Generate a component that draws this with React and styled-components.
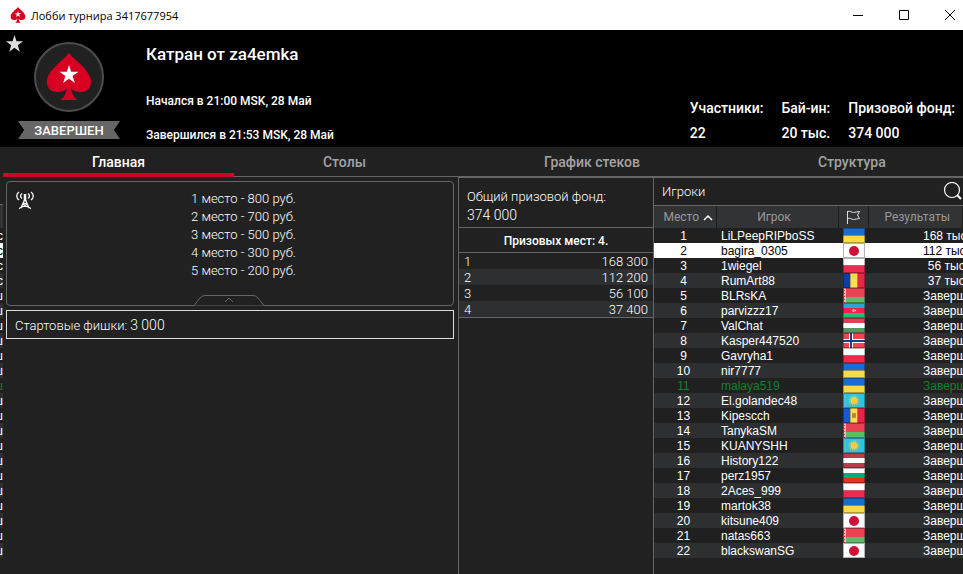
import React from 'react'
import styled, { createGlobalStyle } from 'styled-components'

const GlobalStyle = createGlobalStyle`
* { box-sizing: border-box; }
html, body, #root { height: 100%; }
body {
  margin: 0;
  overflow: hidden;
  background: #212121;
  color: #fff;
  font-family: Roboto, sans-serif;
}
button {
  margin: 0;
  padding: 0;
  border: none;
  background: none;
  color: inherit;
  font: inherit;
  cursor: pointer;
}
svg { display: block; }
`

const Window = styled.div`
  display: flex;
  flex-direction: column;
  min-height: 100vh;
`
const TitleBar = styled.div`
  display: flex;
  align-items: center;
  height: 30px;
  padding-left: 10px;
  background: #fff;
  color: #000;
`
const WindowTitle = styled.div`
  flex: 1;
  margin-left: 5px;
  font-family: "Open Sans", sans-serif;
  font-size: 11px;
`
const WindowButton = styled.button`
  display: flex;
  align-items: center;
  justify-content: center;
  width: 46px;
  height: 28px;
  &:last-child {
    justify-content: flex-start;
    width: 36px;
    padding-left: 18px;
  }
`

const Header = styled.header`
  position: relative;
  display: flex;
  height: 117px;
  padding: 12px 8px 0 18px;
  background: #000;
  font-weight: 500;
`
const Favourite = styled.button`
  position: absolute;
  top: 5px;
  left: 6px;
`
const Badge = styled.div`
  display: flex;
  flex-direction: column;
  align-items: center;
  gap: 9px;
  width: 102px;
`
const Ribbon = styled.div`
  width: 102px;
  height: 18px;
  background: #666;
  clip-path: polygon(0 0, 100% 0, 94% 50%, 100% 100%, 0 100%, 6% 50%);
  font-size: 13px;
  line-height: 19px;
  text-align: center;
`
const Info = styled.div`
  flex: 1;
  margin-left: 26px;
  font-size: 12px;
`
const Title = styled.h1`
  margin: 0 0 23px;
  font-size: 17px;
  font-weight: 500;
  line-height: 24px;
`
const Time = styled.div`
  height: 34px;
  line-height: 24px;
`
const Stats = styled.dl`
  display: flex;
  gap: 18px;
  margin: 54px 0 0;
  font-size: 14px;
  line-height: 25px;
  dd { margin: 0; }
`

const Tabs = styled.nav`
  display: flex;
  height: 30px;
  margin-left: 3px;
  border-bottom: 1px solid #666;
`
const Tab = styled.button`
  flex: 1 0 auto;
  height: 30px;
  padding: 4px 89px 0;
  border-bottom: 4px solid ${props => props.$active ? '#d70022' : 'transparent'};
  color: ${props => props.$active ? '#fff' : '#a3a3a3'};
  font-size: 14px;
  font-weight: 500;
`

const Body = styled.main`
  flex: 1;
  display: grid;
  grid-template-columns: 3px minmax(0, 1fr) 195px 310px;
`

/* edge of the lobby window lying behind this one */
const Behind = styled.div`
  overflow: hidden;
  padding-top: 27px;
`
const BehindHead = styled.div`
  height: 24px;
  border-top: 1px solid #666;
  background: #323335;
`
const BehindRow = styled.div`
  display: flex;
  justify-content: flex-end;
  height: 15px;
  background: ${props => props.$current ? '#fff' : props.$even ? '#2d2f31' : '#202020'};
  color: ${props => props.$current ? '#000' : props.$own ? '#12802f' : '#fff'};
  font-family: "Liberation Sans", sans-serif;
  font-size: 12px;
  line-height: 16px;
`

const Left = styled.section`
  padding: 4px 4px 0 3px;
`
const Message = styled.div`
  position: relative;
  display: flex;
  height: 125px;
  padding: 8px 0 0 9px;
  border: 1px solid #666;
  border-radius: 4px;
`
const MessageText = styled.div`
  display: flex;
  flex: 1;
  justify-content: center;
  font-size: 13px;
  font-weight: 300;
  line-height: 18px;
  white-space: pre-line;
`
const Collapse = styled.button`
  position: absolute;
  bottom: -1px;
  left: calc(50% - 36px);
`
const Chips = styled.div`
  height: 29px;
  margin-top: 4px;
  padding-left: 8px;
  border: 1px solid #ddd;
  font-size: 13px;
  font-weight: 300;
  line-height: 28px;
`
const Value = styled.span`
  margin-left: 3px;
  font-size: 14px;
`

const Middle = styled.section`
  border-left: 1px solid #666;
  border-top: 1px solid #666;
`
const Pool = styled.div`
  height: 50px;
  padding: 10px 8px 0;
  border-bottom: 1px solid #666;
  font-size: 13px;
  font-weight: 300;
  line-height: 18px;
`
const Total = styled.div`
  font-size: 14px;
`
const Places = styled.div`
  height: 25px;
  border-bottom: 1px solid #666;
  font-size: 12px;
  font-weight: 500;
  line-height: 26px;
  text-align: center;
`
const PrizeTable = styled.table`
  width: 100%;
  border-collapse: collapse;
  box-shadow: 0 1px 0 #666;
  font-size: 13px;
  font-weight: 300;
  line-height: 15px;
  tr:nth-child(even) { background: #2d2f31; }
  td { padding: 1px 5px 0; }
  td:last-child { text-align: right; }
`

const Right = styled.section`
  overflow: hidden;
  border-left: 1px solid #666;
  border-top: 1px solid #666;
`
const PlayersBar = styled.div`
  display: flex;
  align-items: center;
  justify-content: space-between;
  height: 28px;
  padding: 0 1px 0 8px;
  border-bottom: 1px solid #666;
  font-size: 13px;
  font-weight: 300;
`
const PlayersTable = styled.table`
  width: 100%;
  table-layout: fixed;
  border-collapse: collapse;
  font-family: "Liberation Sans", sans-serif;
  font-size: 12px;
`
const HeadCell = styled.th`
  width: ${props => props.$width};
  height: 22px;
  padding: 0 ${props => props.$right || '0'} 0 ${props => props.$left || '0'};
  border-right: 1px solid #1c1c1c;
  background: #323335;
  color: #999;
  font-family: Roboto, sans-serif;
  font-size: 12px;
  font-weight: 400;
  white-space: nowrap;
  svg { display: inline-block; vertical-align: middle; }
`
const PlayerRow = styled.tr`
  height: 15px;
  background: ${props => props.$current ? '#fff' : '#202020'};
  color: ${props => props.$current ? '#000' : props.$own ? '#12802f' : '#fff'};
  line-height: 14px;
  &:nth-child(even) {
    background: ${props => props.$current ? '#fff' : '#2d2f31'};
  }
  td {
    padding: 1px 0 0;
    white-space: nowrap;
  }
  td:nth-child(1) { padding-right: 3px; text-align: center; }
  td:nth-child(2) { padding-left: 5px; }
  td:nth-child(3) { padding: 0 0 0 5px; }
  td:nth-child(4) { padding-left: 55px; }
`
const Result = styled.div`
  width: 45px;
  text-align: right;
`

const Spade = ({ size }) => (
  <svg width={size} height={size} viewBox="0 0 48 48">
    <path d="M24 0C19 7 2 17 2 29c0 6 4 10 10 10 4 0 8-1 10-4-1 6-3 10-7 12h18c-4-2-6-6-7-12 2 3 6 4 10 4 6 0 10-4 10-10C46 17 29 7 24 0z" fill="#d70022" />
    <path d="M24 12l2.200 6.800h7.300l-5.900 4.300 2.300 7-5.900-4.400-5.900 4.400 2.300-7-5.900-4.300h7.300z" fill="#fff" />
  </svg>
)

const Logo = () => (
  <svg width="70" height="70" viewBox="0 0 70 70">
    <circle cx="35" cy="35" r="34" fill="#212121" stroke="#4d4d4d" strokeWidth="2" />
    <svg x="11" y="11"><Spade size={48} /></svg>
  </svg>
)

const stripes = {
  ua: ['#176dd2', '#ffda44'],
  pl: ['#fff', '#ed2b4f'],
  az: ['#2aa5d8', '#f02050', '#25bd75'],
  hu: ['#df4053', '#fff', '#5b9365'],
  lv: ['#b63e4b', '#fff', '#b63e4b'],
  bg: ['#fff', '#0aa87c', '#e63222'],
}
const pales = {
  ro: ['#0c3fa5', '#ffda58', '#ed2542'],
  md: ['#1559ce', '#ffda58', '#ed2145'],
}

const Flag = ({ code }) => (
  <svg width="22" height="15" viewBox="0 0 22 15" role="img" aria-label={code}>
    {stripes[code] && stripes[code].map((fill, i, all) => (
      <rect key={i} y={i * 15 / all.length} width="22" height={15 / all.length} fill={fill} />
    ))}
    {pales[code] && pales[code].map((fill, i) => (
      <rect key={i} x={i * 22 / 3} width={22 / 3} height="15" fill={fill} />
    ))}
    {code === 'jp' && <><rect width="22" height="15" fill="#fff" /><circle cx="11" cy="8" r="5" fill="#d00f38" /></>}
    {code === 'by' && (
      <>
        <rect width="22" height="15" fill="#e84453" />
        <rect y="9" width="22" height="6" fill="#5bbd6b" />
        <rect width="3" height="15" fill="#e84453" />
        <path d="M1.500 0v15" stroke="#f3b4bc" strokeDasharray="2 1" />
        <path d="M2.500 0v15" stroke="#f3b4bc" />
      </>
    )}
    {code === 'kz' && (
      <>
        <rect width="22" height="15" fill="#2fc3df" />
        <path d="M2 0v15" stroke="#9bc97a" strokeDasharray="1 1" />
        <circle cx="11" cy="7.500" r="4.500" fill="none" stroke="#bccb70" strokeWidth="2" strokeDasharray="1 1" />
        <circle cx="11" cy="7.500" r="3.500" fill="#ffcb45" />
      </>
    )}
    {code === 'no' && (
      <>
        <rect width="22" height="15" fill="#f04455" />
        <path d="M8 0v15M0 8h22" stroke="#fff" strokeWidth="4" />
        <path d="M8 0v15M0 8h22" stroke="#173f86" strokeWidth="2" />
      </>
    )}
    {code === 'az' && <><circle cx="10.500" cy="7.500" r="1.500" fill="#f8a0b5" /><circle cx="12.500" cy="7.500" r=".7" fill="#fff" /></>}
    {code === 'md' && <rect x="9" y="5" width="4" height="5" rx="1" fill="#b98542" />}
    <rect x=".5" y=".5" width="21" height="14" fill="none" stroke="#000" strokeOpacity=".3" />
  </svg>
)

const players = [
  ['LiLPeepRIPboSS', 'ua', '168 тыс.'],
  ['bagira_0305', 'jp', '112 тыс.'],
  ['1wiegel', 'pl', '56 тыс.'],
  ['RumArt88', 'ro', '37 тыс.'],
  ['BLRsKA', 'by'],
  ['parvizzz17', 'az'],
  ['ValChat', 'hu'],
  ['Kasper447520', 'no'],
  ['Gavryha1', 'pl'],
  ['nir7777', 'ua'],
  ['malaya519', 'ua'],
  ['El.golandec48', 'kz'],
  ['Kipescch', 'md'],
  ['TanykaSM', 'by'],
  ['KUANYSHH', 'kz'],
  ['History122', 'lv'],
  ['perz1957', 'bg'],
  ['2Aces_999', 'pl'],
  ['martok38', 'ua'],
  ['kitsune409', 'jp'],
  ['natas663', 'by'],
  ['blackswanSG', 'jp'],
]

const prizes = ['168 300', '112 200', '56 100', '37 400']

const App = () => {
  return (
    <Window>
      <GlobalStyle />

      <TitleBar>
        <Spade size={16} />
        <WindowTitle>Лобби турнира 3417677954</WindowTitle>
        <WindowButton aria-label="Свернуть">
          <svg width="10" height="10" stroke="#000"><path d="M0 5.500h10" /></svg>
        </WindowButton>
        <WindowButton aria-label="Развернуть">
          <svg width="10" height="10" stroke="#000" fill="none"><path d="M.5.5h9v9h-9z" /></svg>
        </WindowButton>
        <WindowButton aria-label="Закрыть">
          <svg width="10" height="10" stroke="#000"><path d="M0 0l10 10M10 0L0 10" /></svg>
        </WindowButton>
      </TitleBar>

      <Header>
        <Favourite aria-label="Избранное">
          <svg width="17" height="17" viewBox="0 0 17 17">
            <path d="M8.500 0l2 6.200H17l-5.200 4 2 6.600-5.300-4-5.300 4 2-6.600L0 6.200h6.500z" fill="#ddd" />
          </svg>
        </Favourite>
        <Badge>
          <Logo />
          <Ribbon>ЗАВЕРШЕН</Ribbon>
        </Badge>
        <Info>
          <Title>Катран от za4emka</Title>
          <Time>Начался в 21:00 MSK, 28 Май</Time>
          <Time>Завершился в 21:53 MSK, 28 Май</Time>
        </Info>
        <Stats>
          <div><dt>Участники:</dt><dd>22</dd></div>
          <div><dt>Бай-ин:</dt><dd>20 тыс.</dd></div>
          <div><dt>Призовой фонд:</dt><dd>374 000</dd></div>
        </Stats>
      </Header>

      <Tabs>
        <Tab $active>Главная</Tab>
        <Tab>Столы</Tab>
        <Tab>График стеков</Tab>
        <Tab>Структура</Tab>
      </Tabs>

      <Body>
        <Behind aria-hidden="true">
          <BehindHead />
          {players.map((player, i) => (
            <BehindRow key={i} $current={i === 1} $own={i === 10} $even={i % 2 === 1}>
              {player[2] ? 'с' : 'ш'}
            </BehindRow>
          ))}
        </Behind>

        <Left>
          <Message>
            <svg width="18" height="20" viewBox="0 0 18 20" fill="none" stroke="#fff" strokeWidth="1.300">
              <path d="M3 2C0 4 0 8 3 10M15 2c3 2 3 6 0 8M6 3.500c-2 1.500-2 3.500 0 5M12 3.500c2 1.500 2 3.500 0 5" />
              <path d="M9 4v7" strokeWidth="2.500" />
              <path d="M8.500 10L5 18M9.500 10L13 18M6.500 13.500h5M3 18.500l8-4M15 18.500l-8-4" />
            </svg>
            <MessageText>
              {'1 место - 800 руб.\n2 место - 700 руб.\n3 место - 500 руб.\n4 место - 300 руб.\n5 место - 200 руб.'}
            </MessageText>
            <Collapse aria-label="Скрыть сообщение">
              <svg width="70" height="11" viewBox="0 0 70 11" fill="none" stroke="#666">
                <path d="M0 10.500L6 3Q8 .5 11 .5h48Q62 .5 64 3l6 7.500" fill="#212121" />
                <path d="M31 7l4-4 4 4" />
              </svg>
            </Collapse>
          </Message>
          <Chips>Стартовые фишки:<Value>3 000</Value></Chips>
        </Left>

        <Middle>
          <Pool>
            Общий призовой фонд:
            <Total>374 000</Total>
          </Pool>
          <Places>Призовых мест: 4.</Places>
          <PrizeTable>
            <tbody>
              {prizes.map((prize, i) => (
                <tr key={i}><td>{i + 1}</td><td>{prize}</td></tr>
              ))}
            </tbody>
          </PrizeTable>
        </Middle>

        <Right>
          <PlayersBar>
            Игроки
            <button aria-label="Поиск">
              <svg width="19" height="19" viewBox="0 0 19 19" fill="none" stroke="#fff" strokeWidth="1.200">
                <circle cx="9" cy="8" r="7.500" />
                <path d="M14 13l4 4" strokeWidth="2" />
              </svg>
            </button>
          </PlayersBar>
          <PlayersTable>
            <thead>
              <tr>
                <HeadCell $width="62px" $left="8px">
                  Место{' '}
                  <svg width="12" height="7" fill="none" stroke="#fff" strokeWidth="1.500"><path d="M2 6l4-4 4 4" /></svg>
                </HeadCell>
                <HeadCell $width="122px" $right="6px">Игрок</HeadCell>
                <HeadCell $width="30px" aria-label="Страна">
                  <svg width="15" height="14" fill="none" stroke="#ddd">
                    <path d="M1.500 1v13M1.500 1.500c3-1 4 1 6 1s4-1 6-1l-2 3.500 2 3.500c-2 0-4 1-6 1s-3-2-6-1" />
                  </svg>
                </HeadCell>
                <HeadCell $left="4px">Результаты</HeadCell>
              </tr>
            </thead>
            <tbody>
              {players.map(([name, flag, prize], i) => (
                <PlayerRow key={name} $current={i === 1} $own={i === 10}>
                  <td>{i + 1}</td>
                  <td>{name}</td>
                  <td><Flag code={flag} /></td>
                  <td><Result>{prize || 'Завершил'}</Result></td>
                </PlayerRow>
              ))}
            </tbody>
          </PlayersTable>
        </Right>
      </Body>
    </Window>
  )
}

export default App
